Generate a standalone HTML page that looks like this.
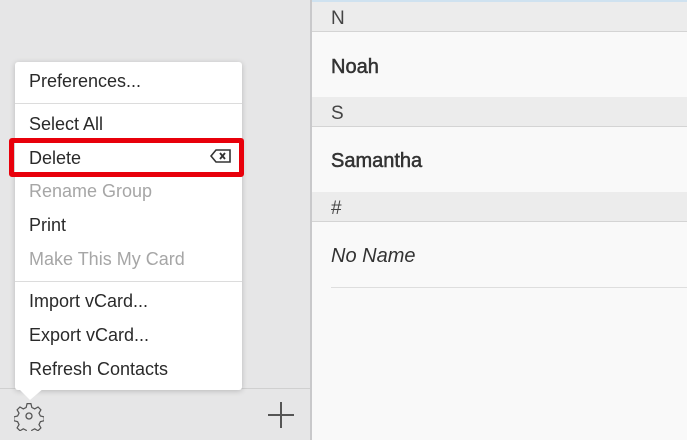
<!DOCTYPE html>
<html><head><style>
*{margin:0;padding:0;box-sizing:border-box}
body{width:687px;height:440px;overflow:hidden;position:relative;font-family:"Liberation Sans",sans-serif;background:#e6e6e7}
.l{position:absolute;left:0;top:0;width:310px;height:440px;background:#e6e6e7}
.bar{position:absolute;left:0;top:388px;width:310px;height:1px;background:#d0d0d0}
.div{position:absolute;left:310px;top:0;width:2px;height:440px;background:#c9c9cb}
.r{position:absolute;left:312px;top:0;width:375px;height:440px;background:#f9f9f9}
.top{position:absolute;left:312px;top:0;width:375px;height:2px;background:#cfe2f0}
.h{position:absolute;left:312px;width:375px;height:30px;background:#ececec;border-bottom:1px solid #d4d4d4;font-size:19px;color:#444;padding:6px 0 0 19px}
.row{position:absolute;left:331px;font-size:20px;color:#333}
.sb{-webkit-text-stroke:0.5px #333}
.menu{position:absolute;left:15px;top:62px;width:227px;height:328px;background:#fff;border-radius:3px;box-shadow:0 1px 6px rgba(0,0,0,.2)}
.it{position:absolute;left:14px;font-size:18px;color:#2a2a2a}
.g{color:#a6a6a6}
.sep{position:absolute;left:0;width:227px;height:1px;background:#dcdcdc}
.red{position:absolute;left:9px;top:138px;width:235px;height:39px;border:5px solid #e8000b;border-radius:3px}
</style></head><body>
<div class="l"></div><div class="bar"></div><div class="div"></div>
<div class="r"></div><div class="top"></div>
<div class="h" style="top:2px">N</div>
<div class="row sb" style="top:56px">Noah</div>
<div class="h" style="top:97px">S</div>
<div class="row sb" style="top:150px">Samantha</div>
<div class="h" style="top:192px">#</div>
<div class="row" style="top:245px;font-style:italic">No Name</div>
<div style="position:absolute;left:331px;top:287px;width:356px;height:1px;background:#dedede"></div>
<div class="menu">
<div class="it" style="top:9px">Preferences...</div>
<div class="sep" style="top:41px"></div>
<div class="it" style="top:52px">Select All</div>
<div class="it" style="top:86px">Delete</div>
<svg style="position:absolute;left:195px;top:87px" width="21" height="14" viewBox="0 0 21 14"><path d="M6 1H20V13H6L1 7Z" fill="none" stroke="#333" stroke-width="1.6"/><path d="M10 4L15 10M15 4L10 10" stroke="#333" stroke-width="1.8"/></svg>
<div class="it g" style="top:119px">Rename Group</div>
<div class="it" style="top:153px">Print</div>
<div class="it g" style="top:187px">Make This My Card</div>
<div class="sep" style="top:219px"></div>
<div class="it" style="top:229px">Import vCard...</div>
<div class="it" style="top:263px">Export vCard...</div>
<div class="it" style="top:297px">Refresh Contacts</div>
</div>
<svg style="position:absolute;left:18px;top:388px" width="30" height="14"><path d="M0 0L12 12L26 0Z" fill="#fff"/></svg>
<div class="red"></div>
<svg style="position:absolute;left:14px;top:401px" width="30" height="30" viewBox="-15 -15 30 30"><path d="M-2-13h4l1 4 3 1.5 3.5-2 3 3-2 3.5 1.5 3 4 1v4l-4 1-1.5 3 2 3.5-3 3-3.5-2-3 1.5-1 4h-4l-1-4-3-1.5-3.5 2-3-3 2-3.5-1.5-3-4-1v-4l4-1 1.5-3-2-3.5 3-3 3.5 2 3-1.5z" fill="none" stroke="#555" stroke-width="1.3" transform="scale(.95)"/><circle r="3" fill="none" stroke="#555" stroke-width="1.3"/></svg>
<div style="position:absolute;left:268px;top:414px;width:26px;height:1.5px;background:#555"></div>
<div style="position:absolute;left:280px;top:402px;width:1.5px;height:26px;background:#555"></div>
</body></html>
